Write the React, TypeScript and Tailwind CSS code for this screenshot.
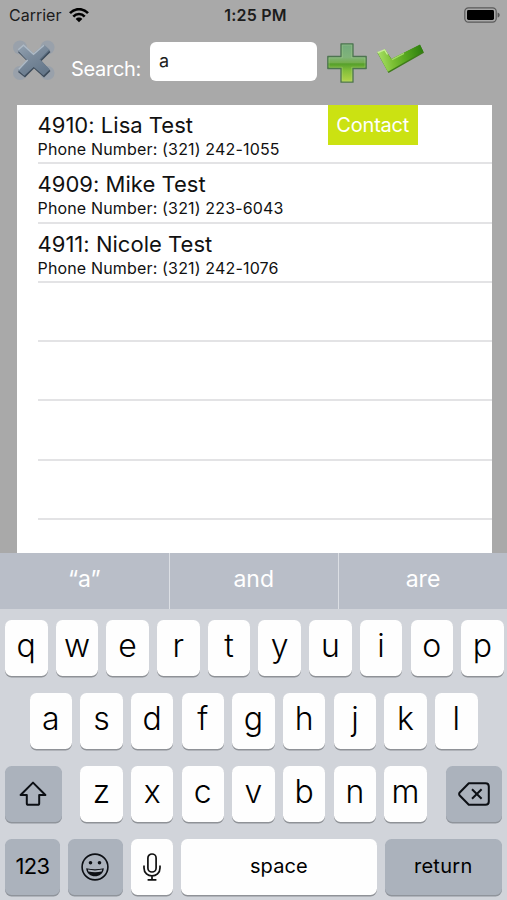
import React, { useState } from 'react';

interface Contact {
  id: number;
  name: string;
  phone: string;
}

const contacts: Contact[] = [
  { id: 4910, name: 'Lisa Test', phone: '(321) 242-1055' },
  { id: 4909, name: 'Mike Test', phone: '(321) 223-6043' },
  { id: 4911, name: 'Nicole Test', phone: '(321) 242-1076' },
];

const emptyRows = [0, 1, 2, 3, 4];

const suggestions = ['“a”', 'and', 'are'];

const StatusBar = () => (
  <div className="grid h-[30px] grid-cols-3 items-center pl-[9px] pr-[7px] text-[#1c1c1c]">
    <div className="flex items-center gap-[8px]">
      <span className="text-[16px] leading-[30px]">Carrier</span>
      <svg width="20" height="15" viewBox="0 0 20 15" fill="none" stroke="#000" strokeWidth="2.6">
        <path d="M1 5.2C6-0.2 14-0.2 19 5.2" />
        <path d="M4.3 8.6C7.4 5.2 12.6 5.2 15.7 8.6" />
        <path d="M10 14.2L6.7 10.9C8.5 9 11.5 9 13.3 10.9Z" fill="#000" stroke="none" />
      </svg>
    </div>
    <span className="pl-[2px] text-center text-[16px] font-semibold leading-[30px] tracking-[0.2px]">1:25 PM</span>
    <div className="flex justify-end">
      <svg width="36" height="16" viewBox="0 0 36 16" fill="none">
        <rect x="0.8" y="0.8" width="31.4" height="14.4" rx="3.6" stroke="#5a5a5a" strokeWidth="1.2" />
        <rect x="3" y="3" width="27" height="10" rx="1.4" fill="#000" />
        <path d="M33.6 5.4C36.4 6.2 36.4 9.8 33.6 10.6Z" fill="#555" />
      </svg>
    </div>
  </div>
);

const CloseIcon = () => (
  <svg width="44" height="42" viewBox="0 0 44 42">
    <defs>
      <linearGradient id="cross" x1="0" y1="0" x2="0.6" y2="1">
        <stop offset="0" stopColor="#94a3b2" />
        <stop offset="0.45" stopColor="#7b8b9c" />
        <stop offset="1" stopColor="#66788b" />
      </linearGradient>
    </defs>
    <g fill="#8a9bad" opacity="0.5">
      <circle cx="8" cy="7.5" r="7" />
      <circle cx="35.5" cy="7.5" r="7" />
      <circle cx="8" cy="33" r="7" />
      <circle cx="35.5" cy="33" r="7" />
    </g>
    <path
      d="M12 6L22 14.5L32 6L38.5 12L29.5 21L38.5 31L32 37.5L22 28.5L13 37.5L6 32L15 21L6 12Z"
      fill="#3d4b5a"
    />
    <path
      d="M11.5 4.5L21.5 13.3L32 4.5L38 10L28.5 19.8L37.8 29.5L31.5 35.5L21.7 27L12.3 35.7L5.8 30L14.8 20L5.5 10.2Z"
      fill="url(#cross)"
    />
    <path d="M6.3 9.8L11.5 5.3L21.5 14.2L32 5.3M6.6 29.6L15.6 20" fill="none" stroke="#aebac6" strokeWidth="1.4" />
    <path d="M37.3 10.4L28 19.8" stroke="#586a7c" strokeWidth="1.2" />
  </svg>
);

const PlusIcon = () => (
  <svg width="42" height="42" viewBox="0 0 42 42">
    <defs>
      <linearGradient id="plus" x1="0" y1="0" x2="0" y2="1">
        <stop offset="0" stopColor="#72aa7c" />
        <stop offset="0.35" stopColor="#80b37a" />
        <stop offset="0.5" stopColor="#74ae4a" />
        <stop offset="0.52" stopColor="#559f2b" />
        <stop offset="0.7" stopColor="#83bf3b" />
        <stop offset="1" stopColor="#b4d549" />
      </linearGradient>
    </defs>
    <path
      d="M15 1.8H27V14.5H40.2V26.5H27V40.2H15V26.5H1.8V14.5H15Z"
      fill="url(#plus)"
      stroke="#4d7450"
      strokeWidth="1.3"
      strokeLinejoin="round"
    />
    <path d="M16.3 3.1H25.7V15.8H38.9V25.2H25.7V38.9H16.3V25.2H3.1V15.8H16.3Z" fill="none" stroke="#b5d699" strokeOpacity="0.3" />
  </svg>
);

const CheckIcon = () => (
  <svg width="48" height="30" viewBox="0 0 48 30">
    <defs>
      <linearGradient id="check" x1="0" y1="0.3" x2="1" y2="0.2">
        <stop offset="0" stopColor="#a8e068" />
        <stop offset="0.3" stopColor="#7cc034" />
        <stop offset="0.6" stopColor="#56a61e" />
        <stop offset="1" stopColor="#2c7d0d" />
      </linearGradient>
    </defs>
    <path d="M0.5 9L8 5.5L14.5 15L43 1L47 8.8L11.5 29Z" fill="#3e7a1a" />
    <path d="M0 7.8L3.5 8L7.8 5L14.2 15L43 0.5L46.3 7.6L10.8 27.8Z" fill="url(#check)" />
    <path d="M0.8 8.6L7.6 5.9L10.5 10.5" fill="none" stroke="#c8ef98" strokeWidth="1.4" />
    <path d="M15 15.6L27 9.4" stroke="#a3d86a" strokeWidth="1.2" />
  </svg>
);

interface KeyProps {
  children?: React.ReactNode;
  className: string;
  dark?: boolean;
  label?: string;
  onClick?: () => void;
}

const Key = ({ children, className, dark, label, onClick }: KeyProps) => (
  <button
    type="button"
    aria-label={label}
    onClick={onClick}
    className={`flex h-[56px] shrink-0 items-center justify-center rounded-[6.5px] text-black ${
      dark ? 'bg-[#abb2bc] shadow-[0_1.5px_0_#8f949b]' : 'bg-[#fefefe] shadow-[0_1.5px_0_#8f9297]'
    } ${className}`}
  >
    {children}
  </button>
);

interface LettersProps {
  letters: string;
  onPress: (letter: string) => void;
}

const Letters = ({ letters, onPress }: LettersProps) => (
  <div className="flex gap-[8.2px]">
    {letters.split('').map(letter => (
      <Key key={letter} className="w-[42.5px] pb-[3px] text-[32px] font-light leading-none" onClick={() => onPress(letter)}>
        {letter}
      </Key>
    ))}
  </div>
);

export default function App() {
  const [query, setQuery] = useState('a');

  const press = (letter: string) => setQuery(prev => prev + letter);

  return (
    <div className="flex h-[900px] w-[507px] flex-col overflow-hidden bg-[#a9a9a9] font-['Inter','Liberation_Sans',sans-serif]">
      <StatusBar />

      {/* Search header */}
      <div className="flex h-[75px] items-start pl-[12px]">
        <button type="button" aria-label="Close" className="mt-[10px]">
          <CloseIcon />
        </button>
        <label htmlFor="search" className="ml-[15px] mt-[24px] w-[79px] whitespace-nowrap text-[20px] leading-[30px] tracking-[-0.3px] text-white">
          Search:
        </label>
        <input
          id="search"
          type="text"
          value={query}
          onChange={e => setQuery(e.target.value)}
          className="mt-[12px] h-[39px] w-[167px] rounded-[6px] bg-white px-[9px] pb-[2px] text-[18px] text-[#1c1c1c] outline-none"
        />
        <button type="button" aria-label="Add" className="ml-[9px] mt-[12px]">
          <PlusIcon />
        </button>
        <button type="button" aria-label="Done" className="ml-[9px] mt-[14px]">
          <CheckIcon />
        </button>
      </div>

      {/* Results */}
      <div className="relative ml-[17px] mr-[15px] h-[447.5px] overflow-hidden bg-white pl-[20.5px]">
        {contacts.map(contact => (
          <div key={contact.id} className="h-[59.3px] border-b-2 border-[#e3e3e5] pt-[7px] text-[#111]">
            <div className="text-[22px] leading-[27px] tracking-[0.02px]">
              {contact.id}: {contact.name}
            </div>
            <div className="text-[16px] leading-[20px] tracking-[0.16px]">Phone Number: {contact.phone}</div>
          </div>
        ))}
        {emptyRows.map(row => (
          <div key={row} className="h-[59.3px] border-b-2 border-[#e3e3e5]" />
        ))}
        <div className="absolute left-[310.5px] top-0 flex h-[40px] w-[90.5px] items-center justify-center bg-[#cbe212] text-[20px] tracking-[-0.2px] text-white">
          Contact
        </div>
      </div>

      {/* Keyboard */}
      <div className="flex flex-1 flex-col bg-[#d1d4da]">
        <div className="grid h-[56.5px] grid-cols-[169.5px_169.5px_1fr] bg-[#b9bec8]">
          {suggestions.map((word, i) => (
            <div
              key={word}
              className={`flex items-center justify-center pb-[4px] text-[23px] text-white ${i < 2 ? 'border-r border-[#dcdfe4]' : ''}`}
            >
              {word}
            </div>
          ))}
        </div>
        <div className="flex flex-col gap-[17px] px-[5px] pt-[10.5px]">
          <Letters letters="qwertyuiop" onPress={press} />
          <div className="flex justify-center">
            <Letters letters="asdfghjkl" onPress={press} />
          </div>
          <div className="flex justify-between">
            <Key dark label="Shift" className="w-[56.5px]">
              <svg width="28" height="26" viewBox="0 0 28 26" fill="none" stroke="#0c0f14" strokeWidth="2" strokeLinejoin="round">
                <path d="M14 1.6L26.4 14H20.2V22.2Q20.2 23.8 18.6 23.8H9.4Q7.8 23.8 7.8 22.2V14H1.6Z" />
              </svg>
            </Key>
            <Letters letters="zxcvbnm" onPress={press} />
            <Key dark label="Delete" className="w-[56.5px]" onClick={() => setQuery(prev => prev.slice(0, -1))}>
              <svg width="32" height="24" viewBox="0 0 32 24" fill="none" stroke="#0c0f14" strokeWidth="2" strokeLinejoin="round">
                <path d="M10.8 1.2H27.5Q30.8 1.2 30.8 4.5V19.5Q30.8 22.8 27.5 22.8H10.8L1.5 13.2Q0.8 12 1.5 10.8Z" />
                <path d="M14 7.2L23.6 16.8M23.6 7.2L14 16.8" />
              </svg>
            </Key>
          </div>
          <div className="flex justify-between">
            <Key dark className="w-[55px] text-[22px] tracking-[-0.6px]">123</Key>
            <Key dark label="Emoji" className="w-[55px]">
              <svg width="28" height="28" viewBox="0 0 28 28" fill="none">
                <circle cx="14" cy="14" r="12.9" stroke="#0c0f14" strokeWidth="1.6" />
                <circle cx="9.5" cy="9.8" r="1.8" fill="#0c0f14" />
                <circle cx="18.5" cy="9.8" r="1.8" fill="#0c0f14" />
                <path d="M5.2 15.2Q14 17.4 22.8 15.2C22.2 26 5.8 26 5.2 15.2Z" fill="#0c0f14" />
                <path d="M6.8 16.6Q14 18.2 21.2 16.6L20.6 18.6Q14 20 7.4 18.6Z" fill="#abb2bc" />
              </svg>
            </Key>
            <Key label="Dictate" className="w-[42.5px]">
              <svg width="18" height="28" viewBox="0 0 18 28" fill="none" stroke="#111" strokeWidth="1.7">
                <rect x="4.9" y="1" width="8.2" height="18" rx="4.1" />
                <path d="M1 12.5V15C1 25.6 17 25.6 17 15V12.5M9 23V26.6M4.6 26.8H13.4" />
              </svg>
            </Key>
            <Key className="w-[195.5px] pb-[2px] text-[20px] tracking-[0.1px]" onClick={() => press(' ')}>space</Key>
            <Key dark className="w-[117.5px] pb-[2px] text-[20px] tracking-[0.3px]">return</Key>
          </div>
        </div>
      </div>
    </div>
  );
}
